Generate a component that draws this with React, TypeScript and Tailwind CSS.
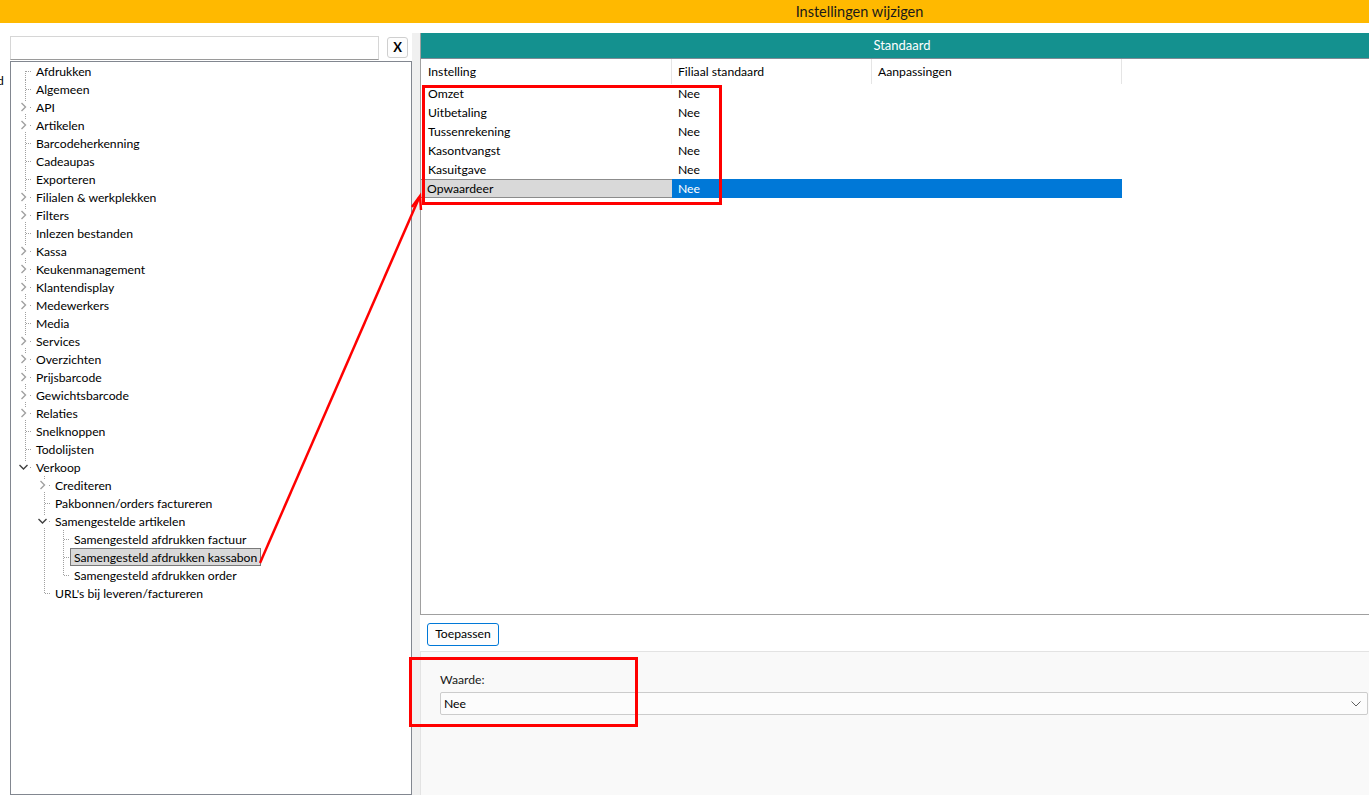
import React from "react";

type TNode = { label: string; children?: TNode[]; expanded?: boolean; selected?: boolean; collapsed?: boolean };

const tree: TNode[] = [
  { label: "Afdrukken" },
  { label: "Algemeen" },
  { label: "API", collapsed: true },
  { label: "Artikelen", collapsed: true },
  { label: "Barcodeherkenning" },
  { label: "Cadeaupas" },
  { label: "Exporteren" },
  { label: "Filialen & werkplekken", collapsed: true },
  { label: "Filters", collapsed: true },
  { label: "Inlezen bestanden" },
  { label: "Kassa", collapsed: true },
  { label: "Keukenmanagement", collapsed: true },
  { label: "Klantendisplay", collapsed: true },
  { label: "Medewerkers", collapsed: true },
  { label: "Media" },
  { label: "Services", collapsed: true },
  { label: "Overzichten", collapsed: true },
  { label: "Prijsbarcode", collapsed: true },
  { label: "Gewichtsbarcode", collapsed: true },
  { label: "Relaties", collapsed: true },
  { label: "Snelknoppen" },
  { label: "Todolijsten" },
  {
    label: "Verkoop",
    expanded: true,
    children: [
      { label: "Crediteren", collapsed: true },
      { label: "Pakbonnen/orders factureren" },
      {
        label: "Samengestelde artikelen",
        expanded: true,
        children: [
          { label: "Samengesteld afdrukken factuur" },
          { label: "Samengesteld afdrukken kassabon", selected: true },
          { label: "Samengesteld afdrukken order" },
        ],
      },
      { label: "URL's bij leveren/factureren" },
    ],
  },
];

type Flat = {
  node: TNode;
  level: number;
  isLast: boolean;
  isFirstRoot: boolean;
  ancestorsNext: boolean[];
};

function flatten(nodes: TNode[], level: number, ancestorsNext: boolean[], out: Flat[]) {
  nodes.forEach((n, i) => {
    const isLast = i === nodes.length - 1;
    out.push({ node: n, level, isLast, isFirstRoot: level === 1 && i === 0, ancestorsNext });
    if (n.children && n.expanded) flatten(n.children, level + 1, [...ancestorsNext, !isLast], out);
  });
  return out;
}

const DOT = "#a0a0a0";

function AncestorGuide({ line }: { line: boolean }) {
  return (
    <svg width="19" height="18" className="shrink-0 block">
      {line && (
        <line x1="9.5" y1="0" x2="9.5" y2="18" stroke={DOT} strokeWidth="1" strokeDasharray="1 1" shapeRendering="crispEdges" />
      )}
    </svg>
  );
}

function OwnGuide({ f }: { f: Flat }) {
  const hasKids = !!(f.node.children || f.node.collapsed);
  const y1 = f.isFirstRoot ? 9 : 0;
  const y2 = f.isLast ? 9 : 18;
  return (
    <svg width="16" height="18" className="shrink-0 block">
      <line x1="9.5" y1={y1} x2="9.5" y2={y2} stroke={DOT} strokeWidth="1" strokeDasharray="1 1" shapeRendering="crispEdges" />
      {!hasKids && (
        <line x1="10" y1="9.5" x2="16" y2="9.5" stroke={DOT} strokeWidth="1" strokeDasharray="1 1" shapeRendering="crispEdges" />
      )}
      {hasKids && (
        <>
          <rect x="3" y="3" width="10" height="12" fill="#ffffff" />
          <rect x="14" y="9" width="1" height="1" fill={DOT} />
          {f.node.expanded ? (
            <path d="M3.5 7 L7.5 11 L11.5 7" fill="none" stroke="#404040" strokeWidth="1.4" />
          ) : (
            <path d="M5.5 5 L9.5 9 L5.5 13" fill="none" stroke="#a0a0a0" strokeWidth="1.4" />
          )}
        </>
      )}
    </svg>
  );
}

function TreeRow({ f }: { f: Flat }) {
  return (
    <div className="flex h-[18px] items-center">
      {f.ancestorsNext.map((a, i) => (
        <AncestorGuide key={i} line={a} />
      ))}
      <OwnGuide f={f} />
      <div
        className={
          "h-[18px] px-[3px] border leading-[17px] whitespace-nowrap text-black " +
          (f.node.selected ? "bg-[#d9d9d9] border-[#7a7a7a]" : "border-transparent")
        }
      >
        {f.node.label}
      </div>
    </div>
  );
}

const rows = ["Omzet", "Uitbetaling", "Tussenrekening", "Kasontvangst", "Kasuitgave"];

export default function App() {
  const flat = flatten(tree, 1, [], []);
  return (
    <div
      className="relative w-[1369px] h-[795px] overflow-hidden bg-white flex flex-col text-[12.2px] text-black"
      style={{ fontFamily: 'Lato, "Noto Sans", sans-serif' }}
    >
      {/* Title bar */}
      <div className="h-[23px] shrink-0 bg-[#ffb900] flex items-center justify-center pl-[350px]">
        <span className="text-[14.5px] text-[#1a1a1a] leading-[20px]">Instellingen wijzigen</span>
      </div>

      <div className="flex flex-1 min-h-0 pt-[10px]">
        {/* left edge */}
        <div className="w-[10px] shrink-0 overflow-hidden">
          <div className="mt-[40px] -ml-[3px] leading-[16px]">d</div>
        </div>

        {/* Left panel */}
        <div className="w-[402px] shrink-0 flex flex-col">
          <div className="flex items-start h-[24px] mt-[3px]">
            <div className="w-[369px] h-[24px] border border-[#d6d6d6] border-b-[#9a9a9a] bg-white" />
            <div className="ml-[8px] mt-[1px] w-[21px] h-[21px] border border-[#cfcfcf] rounded-[3px] bg-[#fdfdfd] flex items-center justify-center font-bold text-[13px] leading-none">
              X
            </div>
          </div>
          <div className="mt-[1px] flex-1 border border-[#828790] bg-white pl-[5px] overflow-hidden">
            {flat.map((f, i) => (
              <TreeRow key={i} f={f} />
            ))}
          </div>
        </div>

        {/* separator */}
        <div className="w-[8px] shrink-0 bg-[#f0f0f0]" />

        {/* Right panel */}
        <div className="flex-1 flex flex-col min-w-0">
          <div className="h-[582px] shrink-0 border-l border-b border-[#a0a0a0] bg-white flex flex-col">
            <div className="h-[25px] shrink-0 bg-[#14918f] flex items-center justify-center pl-[14px] text-white text-[13px]">
              Standaard
            </div>
            <div className="h-px bg-[#7f8a95]" />
            <div className="h-[25px] flex items-center">
              <div className="w-[251px] h-full border-r border-[#e5e5e5] pl-[7px] pt-[2px] flex items-center">Instelling</div>
              <div className="w-[200px] h-full border-r border-[#e5e5e5] pl-[6px] pt-[2px] flex items-center">Filiaal standaard</div>
              <div className="w-[250px] h-full border-r border-[#e5e5e5] pl-[6px] pt-[2px] flex items-center">Aanpassingen</div>
            </div>
            {rows.map((r) => (
              <div key={r} className="h-[19px] flex leading-[19px]">
                <div className="w-[251px] pl-[7px]">{r}</div>
                <div className="w-[450px] pl-[6px]">Nee</div>
              </div>
            ))}
            <div className="h-[19px] flex leading-[17px]">
              <div className="w-[251px] pl-[6px] bg-[#d9d9d9] border-y border-[#8c8c8c]">Opwaardeer</div>
              <div className="w-[450px] pl-[6px] bg-[#0078d7] text-white leading-[19px]">Nee</div>
            </div>
          </div>

          <div className="h-[36px] shrink-0 bg-white pl-[7px] pt-[8px]">
            <div className="w-[72px] h-[23px] border border-[#0078d7] rounded-[3px] bg-[#fdfdfd] flex items-center justify-center leading-none">
              Toepassen
            </div>
          </div>

          <div className="flex-1 bg-[#f9f9f9] border-t border-l border-[#e3e3e3] pl-[19px] pt-[20px] pr-[1px]">
            <div className="leading-[16px] text-[#1a1a1a]">Waarde:</div>
            <div className="mt-[4px] h-[23px] border border-[#cccccc] bg-[#fcfcfc] rounded-[2px] flex items-center justify-between pl-[3px] pr-[6px] pt-px">
              <span>Nee</span>
              <svg width="10" height="6" viewBox="0 0 10 6">
                <path d="M0.5 0.5 L5 5 L9.5 0.5" fill="none" stroke="#606060" strokeWidth="1" />
              </svg>
            </div>
          </div>
        </div>
      </div>

      {/* Red annotations */}
      <svg className="absolute top-0 left-0 pointer-events-none" width="1369" height="795">
        <rect x="423.5" y="86.5" width="297" height="117" fill="none" stroke="#ff0000" strokeWidth="3" />
        <rect x="410.5" y="658.5" width="226" height="67" fill="none" stroke="#ff0000" strokeWidth="3" />
        <line x1="260" y1="563" x2="419" y2="198" stroke="#ff0000" strokeWidth="2.5" />
        <path d="M412 207 L420 196 L421 210" fill="none" stroke="#ff0000" strokeWidth="2.5" />
      </svg>
    </div>
  );
}
